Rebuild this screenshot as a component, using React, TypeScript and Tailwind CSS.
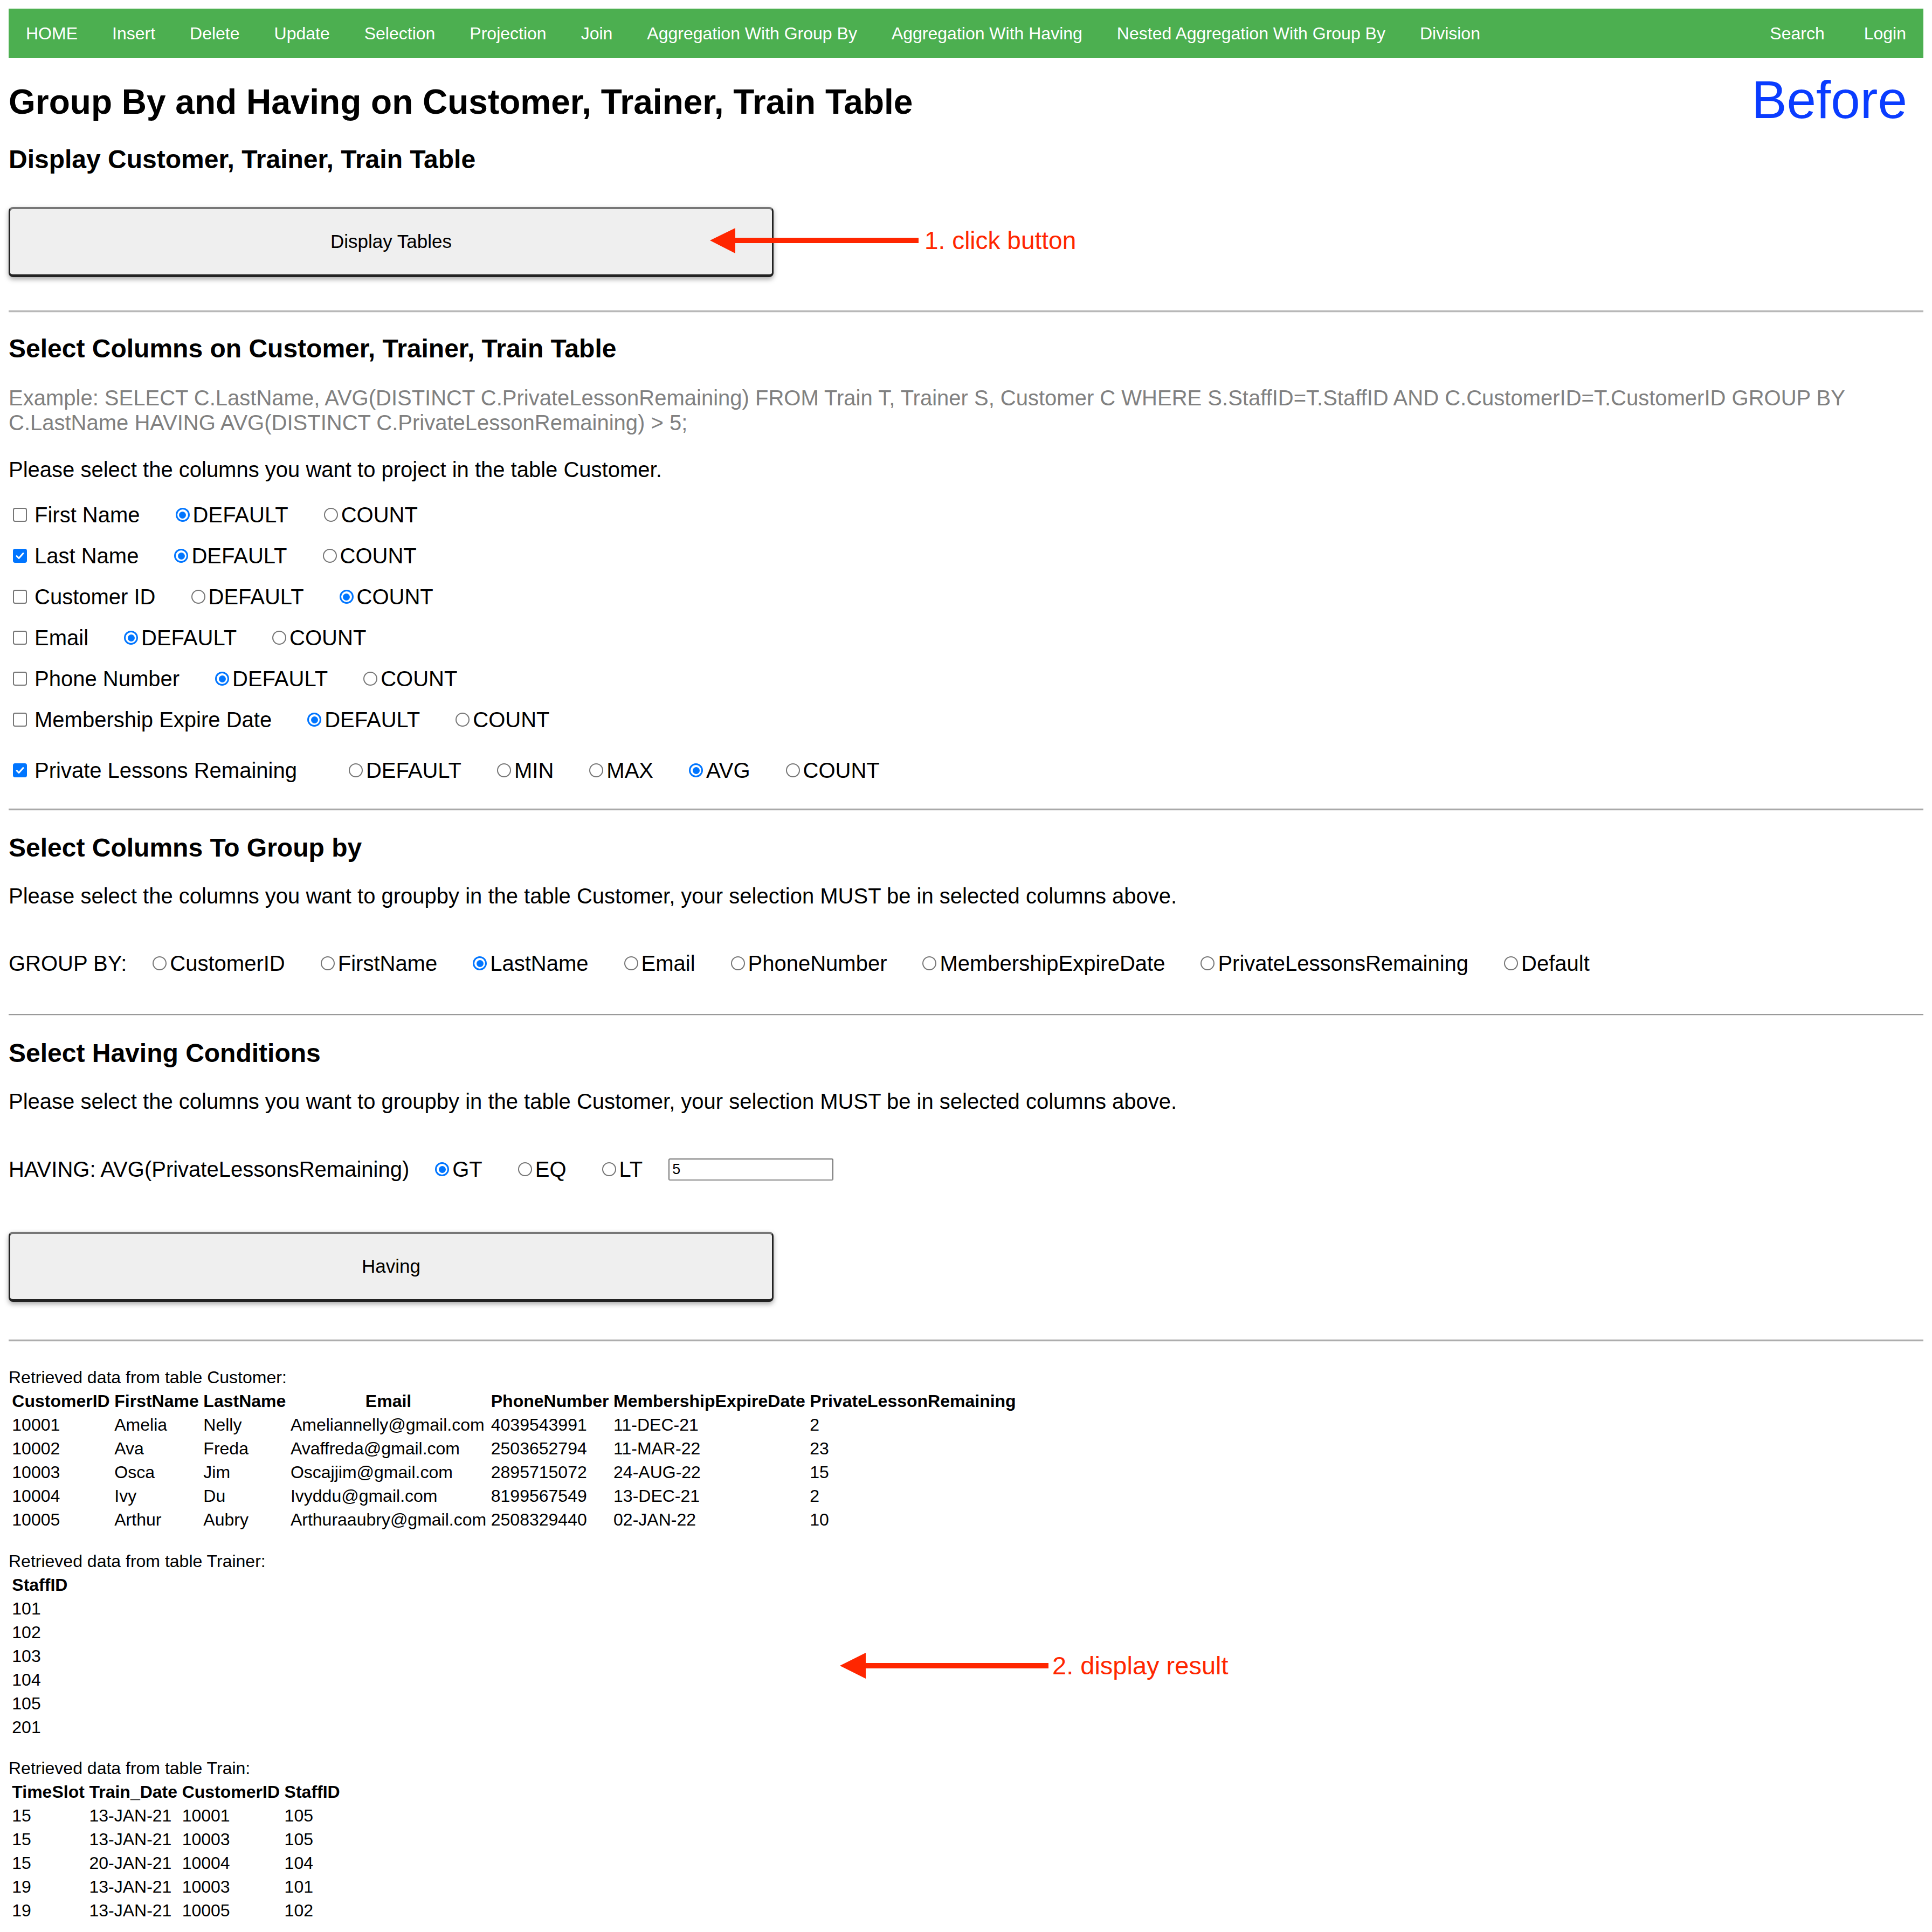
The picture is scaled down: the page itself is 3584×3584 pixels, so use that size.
import React from 'react'

const navLeft = [
  'HOME',
  'Insert',
  'Delete',
  'Update',
  'Selection',
  'Projection',
  'Join',
  'Aggregation With Group By',
  'Aggregation With Having',
  'Nested Aggregation With Group By',
  'Division',
]

const columnRows = [
  { label: 'First Name', checked: false, selected: 0 },
  { label: 'Last Name', checked: true, selected: 0 },
  { label: 'Customer ID', checked: false, selected: 1 },
  { label: 'Email', checked: false, selected: 0 },
  { label: 'Phone Number', checked: false, selected: 0 },
  { label: 'Membership Expire Date', checked: false, selected: 0 },
]

const groupByOptions = [
  'CustomerID',
  'FirstName',
  'LastName',
  'Email',
  'PhoneNumber',
  'MembershipExpireDate',
  'PrivateLessonsRemaining',
  'Default',
]

const customerRows = [
  ['10001', 'Amelia', 'Nelly', 'Ameliannelly@gmail.com', '4039543991', '11-DEC-21', '2'],
  ['10002', 'Ava', 'Freda', 'Avaffreda@gmail.com', '2503652794', '11-MAR-22', '23'],
  ['10003', 'Osca', 'Jim', 'Oscajjim@gmail.com', '2895715072', '24-AUG-22', '15'],
  ['10004', 'Ivy', 'Du', 'Ivyddu@gmail.com', '8199567549', '13-DEC-21', '2'],
  ['10005', 'Arthur', 'Aubry', 'Arthuraaubry@gmail.com', '2508329440', '02-JAN-22', '10'],
]

const trainRows = [
  ['15', '13-JAN-21', '10001', '105'],
  ['15', '13-JAN-21', '10003', '105'],
  ['15', '20-JAN-21', '10004', '104'],
  ['19', '13-JAN-21', '10003', '101'],
  ['19', '13-JAN-21', '10005', '102'],
]

// drawn like Chrome's default controls at 2x
function RadioDot({ checked }: { checked: boolean }) {
  return checked ? (
    <span className="w-[26px] h-[26px] shrink-0 rounded-full border-[3px] border-[#0075ff] bg-white flex items-center justify-center">
      <span className="w-[13px] h-[13px] rounded-full bg-[#0075ff]" />
    </span>
  ) : (
    <span className="w-[26px] h-[26px] shrink-0 rounded-full border-2 border-[#767676] bg-white" />
  )
}

function CheckBox({ checked }: { checked: boolean }) {
  return checked ? (
    <span className="w-[26px] h-[26px] shrink-0 ml-[8px] mr-[14px] rounded-[4px] bg-[#0075ff] flex items-center justify-center">
      <svg width="18" height="18" viewBox="0 0 18 18">
        <path d="M3 9.5 L7 13.5 L15 4.5" fill="none" stroke="white" strokeWidth="3" strokeLinecap="round" strokeLinejoin="round" />
      </svg>
    </span>
  ) : (
    <span className="w-[26px] h-[26px] shrink-0 ml-[8px] mr-[14px] rounded-[4px] border-2 border-[#767676] bg-white" />
  )
}

function Radio({ label, checked, gap }: { label: string; checked: boolean; gap: string }) {
  return (
    <label className={`flex items-center ${gap}`}>
      <span className="mr-[6px] flex">
        <RadioDot checked={checked} />
      </span>
      <span>{label}</span>
    </label>
  )
}

function Heading({ children, className = '' }: { children: React.ReactNode; className?: string }) {
  return <h2 className={`text-[48px] leading-[56px] font-bold ${className}`}>{children}</h2>
}

function Rule({ className = '' }: { className?: string }) {
  return <div className={`h-[4px] border-t-2 border-b-2 border-t-[#9a9a9a] border-b-[#eeeeee] ${className}`} />
}

function BigButton({ label, className = '' }: { label: string; className?: string }) {
  return (
    <button
      type="button"
      className={`w-[1419px] h-[130px] bg-[#efefef] text-[35px] text-black rounded-[8px] border-[3px] border-[#222] border-t-[4px] border-t-[#777] border-b-[5px] shadow-[0_4px_10px_rgba(0,0,0,0.35)] ${className}`}
    >
      {label}
    </button>
  )
}

function DataTable({ caption, headers, rows, className = '' }: { caption: string; headers: string[]; rows: string[][]; className?: string }) {
  return (
    <div className={`text-[32px] leading-[44px] ${className}`}>
      <div className="h-[44px]">{caption}</div>
      <table className="border-separate border-spacing-x-[4.6px] border-spacing-y-0">
        <thead>
          <tr>
            {headers.map((h) => (
              <th key={h} className="px-[2.3px] py-0 font-bold text-center whitespace-nowrap">
                {h}
              </th>
            ))}
          </tr>
        </thead>
        <tbody>
          {rows.map((r, i) => (
            <tr key={i}>
              {r.map((c, j) => (
                <td key={j} className="px-[2.3px] py-0 text-left whitespace-nowrap">
                  {c}
                </td>
              ))}
            </tr>
          ))}
        </tbody>
      </table>
    </div>
  )
}

export default function App() {
  return (
    <div className="relative w-[3584px] min-h-[3584px] bg-white text-black px-[16px] pt-[16px] font-['Liberation_Sans',Arial,Helvetica,sans-serif]">
      {/* Top nav */}
      <nav className="flex h-[92px] bg-[#4caf50] text-white text-[32px]">
        {navLeft.map((n) => (
          <a key={n} className="px-[32px] flex items-center whitespace-nowrap">
            {n}
          </a>
        ))}
        <a className="ml-auto px-[32px] mr-[9px] flex items-center">Search</a>
        <a className="px-[32px] flex items-center">Login</a>
      </nav>

      <div className="mt-[17px] h-[120px] flex items-center justify-between">
        <h1 className="text-[64px] leading-[74px] font-bold mt-[8px] whitespace-nowrap">
          Group By and Having on Customer, Trainer, Train Table
        </h1>
        <div className="text-[98px] leading-[112px] text-[#0a3cff] pr-[30px]">Before</div>
      </div>

      <Heading className="mt-[23px]">Display Customer, Trainer, Train Table</Heading>
      <BigButton label="Display Tables" className="mt-[60px] block" />

      <Rule className="mt-[62px]" />

      <Heading className="mt-[39px]">Select Columns on Customer, Trainer, Train Table</Heading>
      <p className="mt-[40px] text-[40px] leading-[46px] text-[#808080]">
        Example: SELECT C.LastName, AVG(DISTINCT C.PrivateLessonRemaining) FROM Train T, Trainer S, Customer C WHERE
        S.StaffID=T.StaffID AND C.CustomerID=T.CustomerID GROUP BY C.LastName HAVING AVG(DISTINCT
        C.PrivateLessonRemaining) &gt; 5;
      </p>
      <p className="mt-[41px] text-[40px] leading-[46px]">
        Please select the columns you want to project in the table Customer.
      </p>

      <div className="mt-[23px] text-[40px]">
        {columnRows.map((r) => (
          <div key={r.label} className="h-[76px] flex items-center whitespace-nowrap">
            <CheckBox checked={r.checked} />
            <span>{r.label}</span>
            <Radio label="DEFAULT" checked={r.selected === 0} gap="ml-[66px]" />
            <Radio label="COUNT" checked={r.selected === 1} gap="ml-[66px]" />
          </div>
        ))}
        <div className="mt-[18px] h-[76px] flex items-center whitespace-nowrap">
          <CheckBox checked />
          <span>Private Lessons Remaining</span>
          <Radio label="DEFAULT" checked={false} gap="ml-[96px]" />
          <Radio label="MIN" checked={false} gap="ml-[66px]" />
          <Radio label="MAX" checked={false} gap="ml-[66px]" />
          <Radio label="AVG" checked gap="ml-[66px]" />
          <Radio label="COUNT" checked={false} gap="ml-[66px]" />
        </div>
      </div>

      <Rule className="mt-[33px]" />

      <Heading className="mt-[41px]">Select Columns To Group by</Heading>
      <p className="mt-[38px] text-[40px] leading-[46px]">
        Please select the columns you want to groupby in the table Customer, your selection MUST be in selected columns
        above.
      </p>
      <div className="mt-[79px] h-[46px] flex items-center text-[40px] whitespace-nowrap">
        <span>GROUP BY:</span>
        {groupByOptions.map((g, i) => (
          <Radio key={g} label={g} checked={g === 'LastName'} gap={i === 0 ? 'ml-[48px]' : 'ml-[66px]'} />
        ))}
      </div>

      <Rule className="mt-[71px]" />

      <Heading className="mt-[41px]">Select Having Conditions</Heading>
      <p className="mt-[38px] text-[40px] leading-[46px]">
        Please select the columns you want to groupby in the table Customer, your selection MUST be in selected columns
        above.
      </p>
      <div className="mt-[80px] h-[46px] flex items-center text-[40px] whitespace-nowrap">
        <span>HAVING: AVG(PrivateLessonsRemaining)</span>
        <Radio label="GT" checked gap="ml-[48px]" />
        <Radio label="EQ" checked={false} gap="ml-[66px]" />
        <Radio label="LT" checked={false} gap="ml-[66px]" />
        <input
          type="text"
          defaultValue="5"
          className="ml-[48px] w-[306px] h-[41px] border-2 border-[#767676] border-b-[#8a8a8a] rounded-[3px] px-[5px] text-[27px] bg-white"
        />
      </div>

      <BigButton label="Having" className="mt-[93px] block" />

      <Rule className="mt-[70px]" />

      <DataTable
        className="mt-[44px]"
        caption="Retrieved data from table Customer:"
        headers={['CustomerID', 'FirstName', 'LastName', 'Email', 'PhoneNumber', 'MembershipExpireDate', 'PrivateLessonRemaining']}
        rows={customerRows}
      />
      <DataTable
        className="mt-[33px]"
        caption="Retrieved data from table Trainer:"
        headers={['StaffID']}
        rows={[['101'], ['102'], ['103'], ['104'], ['105'], ['201']]}
      />
      <DataTable
        className="mt-[32px]"
        caption="Retrieved data from table Train:"
        headers={['TimeSlot', 'Train_Date', 'CustomerID', 'StaffID']}
        rows={trainRows}
      />

      {/* Annotation arrows */}
      <svg className="absolute left-0 top-0 w-[3584px] h-[3584px] pointer-events-none" viewBox="0 0 3584 3584">
        <polygon points="1317,446 1364,423 1364,470" fill="#ff2600" />
        <rect x="1360" y="441" width="344" height="10" fill="#ff2600" />
        <polygon points="1558,3090 1606,3066 1606,3114" fill="#ff2600" />
        <rect x="1602" y="3085" width="343" height="10" fill="#ff2600" />
      </svg>
      <span className="absolute left-[1715px] top-[420px] text-[46px] leading-[52px] text-[#ff2600] whitespace-nowrap">
        1. click button
      </span>
      <span className="absolute left-[1952px] top-[3064px] text-[47px] leading-[52px] text-[#ff2600] whitespace-nowrap">
        2. display result
      </span>
    </div>
  )
}
